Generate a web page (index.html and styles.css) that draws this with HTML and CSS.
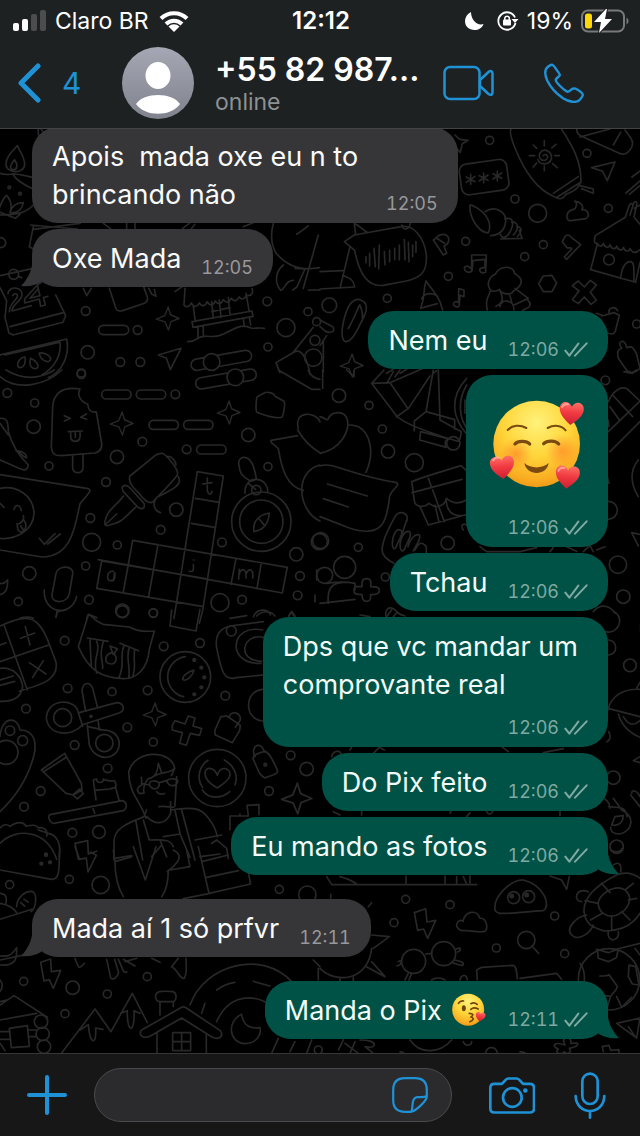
FILE: index.html
```html
<!DOCTYPE html>
<html lang="pt-BR">
<head>
<meta charset="utf-8">
<meta name="viewport" content="width=device-width, initial-scale=1">
<title>+55 82 987...</title>
<link rel="stylesheet" href="styles.css">
</head>
<body>
<svg class="defs" aria-hidden="true">
  <symbol id="ticks" viewBox="730 649 72 48"><path d="M734 675l12 15 27-36M763 690l35-37" fill="none" stroke="currentColor" stroke-width="6" stroke-linecap="round" stroke-linejoin="round"/></symbol>
  <symbol id="tail" viewBox="0 0 24 28"><path d="M12 0v6c-1 7-5 15-11 21 8 1 15-1 20-4l3-3V0z" fill="currentColor"/></symbol>
  <symbol id="spark" viewBox="0 0 80 80"><path d="M42 3l8 25 27 12-26 10-8 27-11-26-28-9 27-11z" fill="none" stroke="currentColor" stroke-width="4.5" stroke-linejoin="round"/></symbol>
  <symbol id="heart" viewBox="0 0 80 80"><path d="M40 76C20 59 2 45 2 24 2 2 30-3 40 18 49-4 78 1 78 24c0 21-18 35-38 52z"/></symbol>
  <linearGradient id="red" x1="0" y1="0" x2="0" y2="1"><stop offset="0" stop-color="#ff6f66"/><stop offset=".45" stop-color="#f13b42"/><stop offset="1" stop-color="#cf1d32"/></linearGradient>
  <radialGradient id="gold" cx=".5" cy=".25" r=".78"><stop offset="0" stop-color="#fff27a"/><stop offset=".5" stop-color="#ffd53a"/><stop offset=".85" stop-color="#f9ac21"/><stop offset="1" stop-color="#ec9315"/></radialGradient>
  <radialGradient id="blush"><stop offset="0" stop-color="#ff7a26" stop-opacity=".6"/><stop offset="1" stop-color="#ff7a26" stop-opacity="0"/></radialGradient>
  <linearGradient id="grey" x1="0" y1="0" x2="0" y2="1"><stop offset="0" stop-color="#a5a8b4"/><stop offset="1" stop-color="#80838d"/></linearGradient>
</svg>

<header class="top">
  <div class="status">
    <div class="status-side">
      <svg class="signal" viewBox="0 0 34 22" aria-hidden="true"><g fill="#fff"><rect y="13" width="6" height="8" rx="2"/><rect x="9" y="9" width="6" height="12" rx="2"/></g><g fill="#4b4d4e"><rect x="18" y="4" width="6" height="17" rx="2"/><rect x="27" width="6" height="21" rx="2"/></g></svg>
      <span>Claro BR</span>
      <svg class="wifi" viewBox="0 0 30 22" aria-hidden="true"><g fill="none" stroke="#fff" stroke-width="4"><path d="M2 8.500a18.500 18.500 0 0 1 26 0M7 14a11.500 11.500 0 0 1 16 0"/></g><path d="M15 22l-5.500-5.500a8 8 0 0 1 11 0z" fill="#fff"/></svg>
    </div>
    <time class="clock">12:12</time>
    <div class="status-side status-right">
      <svg class="moon" viewBox="0 0 20 20" aria-hidden="true"><path d="M6 1C2 3 0 6.500 0 10c0 5.500 4 9 9.500 9 4 0 7.500-2 9-6C12 15 6 9 6 1z" fill="#fff"/></svg>
      <svg class="lock" viewBox="0 0 22 20" aria-hidden="true"><path d="M18.500 12A8.700 8.700 0 1 1 18 6.500" fill="none" stroke="#fff" stroke-width="1.800"/><path d="M14.500 8h7L18 12z" fill="#fff"/><rect x="6" y="8.500" width="8" height="6" rx="1" fill="#fff"/><path d="M7.800 9V7a2.300 2.300 0 0 1 4.500 0v2" fill="none" stroke="#fff" stroke-width="1.500"/></svg>
      <span>19%</span>
      <svg class="battery" viewBox="0 0 48 24" aria-hidden="true"><rect x="1" y="1.500" width="42" height="21" rx="6" fill="none" stroke="#77797a" stroke-width="2"/><path d="M45.500 8.500a4 4 0 0 1 0 7z" fill="#77797a"/><rect x="4" y="4.500" width="7" height="15" rx="2.500" fill="#ffd60a"/><path d="M25 0L13 13h7l-2 11 13-14h-7l2-10z" fill="#fff" stroke="#1e2122" stroke-width="2" paint-order="stroke"/></svg>
    </div>
  </div>
  <div class="contact-bar">
    <a class="back" href="#chats" aria-label="Voltar, 4 conversas">
      <svg viewBox="0 0 24 40" aria-hidden="true"><path d="M20 3L3 20l17 17" fill="none" stroke="currentColor" stroke-width="5" stroke-linecap="round" stroke-linejoin="round"/></svg>
      <span>4</span>
    </a>
    <svg class="avatar" viewBox="0 0 72 72" role="img" aria-label="Foto do contato"><circle cx="36" cy="36" r="36" fill="url(#grey)"/><ellipse cx="36" cy="28.500" rx="12.500" ry="13.500" fill="#fff"/><path d="M14 57c8-12 36-12 44 0-9 13-35 13-44 0z" fill="#fff"/></svg>
    <div class="contact">
      <h1>+55 82 987...</h1>
      <p>online</p>
    </div>
    <button class="icon video" aria-label="Chamada de vídeo"><svg viewBox="0 0 51 36"><g fill="none" stroke="currentColor" stroke-width="2.500" stroke-linejoin="round"><rect x="1.500" y="2" width="35" height="32" rx="5.500"/><path d="M37 15l8.500-8c2-1.600 4-1 4 1.500v19c0 2.500-2 3-4 1.500L37 21z"/></g></svg></button>
    <button class="icon phone" aria-label="Ligar"><svg viewBox="670 183 124 124"><path d="M683 194c12-9 15-7 24 7 17 25 15 16 0 32-5 7 24 33 33 38 5 4 9-1 15-6 8-7 16-2 29 8 10 8 7 12-2 23-11 13-36 7-53-4-19-13-39-34-49-55-8-18-9-34 3-43z" fill="none" stroke="currentColor" stroke-width="7.500" stroke-linejoin="round"/></svg></button>
  </div>
</header>

<main class="chat">
  <svg class="wallpaper" viewBox="0 129 640 924" preserveAspectRatio="xMidYMin slice" aria-hidden="true">
    <g transform="translate(0 125) scale(.3333)">
      <path d="M52 62c-18 20-34 34-34 56 0 28 56 30 56 0 0-22-12-34-22-56zM44 104c-12 12-18 28-5 30 14 1 15-16 5-30zM0 145c20 7 28 2 42 2 20 0 30 5 56 10M38 146c10 25 60 45 65 48M102 238c-30 35-70 30-102 32M0 245c5-18 18-34 20-34 5 5 20 25 10 52M30 263c5-20 20-30 40-30-4 20-15 33-40 30M0 262l46 18 14-12M115 10v20M122 10l8 12"/>
      <circle cx="28" cy="187" r="4"/><circle cx="60" cy="206" r="4"/><circle cx="2" cy="353" r="15"/><circle cx="41" cy="448" r="15"/><circle cx="257" cy="558" r="13"/><circle cx="413" cy="615" r="13"/><circle cx="802" cy="529" r="13"/><circle cx="924" cy="560" r="12"/><circle cx="858" cy="608" r="27"/><circle cx="263" cy="682" r="20"/><circle cx="361" cy="711" r="13"/><circle cx="421" cy="711" r="13"/><circle cx="804" cy="666" r="12"/><circle cx="950" cy="590" r="12"/><circle cx="945" cy="646" r="15"/><circle cx="940" cy="698" r="26"/><circle cx="244" cy="744" r="12"/>
      <path d="M100 305l-12 60 14 8M92 300l140 12M240 295l-140 18M310 295l22 16M380 295v16M405 295v16M548 310l20-15M575 310l10-12M730 305l30-12"/>
      <path d="M0 452l100-22M55 455l10 3M0 488l20 40-5 50 12 46 12 6 150-38 8-20-30-62M30 605l160-42"/>
      <path d="M24 506c2-24 44-22 42 4-1 18-30 28-30 48l58-16M38 512c4-8 16-8 14 2-2 12-24 22-24 46M112 480l-38 42v12l44-12 4 22 14-4-6-22 14-4M130 468l-18 12 8 32-30 8 24-28"/>
      <path d="M0 690l200-48c10 50-15 100-55 116M15 690l165-38c5 40-18 78-55 98"/>
      <path d="M75 696c-20 2-30 30-15 32 14 0 18-20 15-32zM92 700c-6 20 2 35 18 30 12-7-4-24-18-30zM118 684c2 20 24 32 33 22 5-12-16-24-33-22z"/>
      <rect x="296" y="601" width="90" height="28" rx="14"/><path d="M250 490l10 22 14-22M328 490l18 55c3 12 10 15 22 12l65-22c10-5 12-12 8-22l-9-25M446 490l10 18 12 6-5-20M525 500l20-14"/>
      <path d="M475 690l68-20-32 64-12-35zM555 490l-3 50c5 8 18 6 22-6 8 16 18 12 24 0 8 12 18 10 24-4 8 15 18 12 24-2 8 12 18 10 24-4 8 12 18 8 24-4 8 12 18 8 24-4 8 10 18 6 20-5 20 4 22-10 18-20M580 545l6 44M738 505l10 55M635 530l5 50M685 518l5 52M635 560l55-12M658 525l5 52M576 590l180-32 3 16-180 33zM594 606v32M610 604v28M730 580l3 24M748 576l4 24M563 650c24 2 25-15 50-16s30 6 60-8c40-20 55-30 80-17 10 3 24-2 40 1"/>
      <rect x="572" y="689" width="184" height="34" rx="17" transform="rotate(-10 664 706)"/><circle cx="635" cy="711" r="25" fill="#000"/><path d="M820 296c-8 30-8 60 8 88 30 36 70 56 130 44M890 328l35-25M850 420c-30 25-22 60-8 76 14-2 12-30 38-30M885 430l30 2-25 55-12 8M910 490l45-160M925 495h35M840 743l-12-30 55-32c20-12 40 20 47 67M880 682l60-75"/>
    </g>
    <use href="#spark" x="155" y="306" width="25" height="25"/>
    <g transform="translate(320 125) scale(.3333)">
      <path d="M405 30l14 13 25 3-17 10-6 26-15-15M575 10c-15 10 25 105 60 150 25 35 52 50 78 60 15 5 20-5 25-12 35-15 38-22 45-40 0-60-25-105-58-155M700 205l75-50M712 216l70-44M780 182l40 10v13l-35-14M670 92c8-10 20 4 8 12-14 8-24-8-18-20 12-18 38-4 34 18-6 20-36 18-40 2M673 47v16M673 123v14M628 92h16M704 92h14M640 60l10 10M696 68l12-10M640 126l10-12M698 116l14 12"/>
      <rect x="421" y="110" width="143" height="93" rx="22" transform="rotate(-8 492 157)"/>
      <path d="M452 148v30M439 156l26 14M465 154l-26 18M491 144v30M478 152l26 14M504 150l-26 18M532 138v30M519 146l26 14M545 144l-26 18"/>
      <path d="M450 240c-3 30 20 80 54 84 12-20 5-60-50-84zM495 260c30-20 65 0 62 30-4 35-30 42-45 42M554 282c30-10 30 20 10 48-10 12-20 8-24-4M575 292c20-4 24 20 5 38M590 306c18-2 16 16 3 28M598 316l8 24-64 2"/>
      <circle cx="509" cy="46" r="12"/><circle cx="801" cy="85" r="12"/><circle cx="585" cy="222" r="12"/><circle cx="653" cy="265" r="27"/><circle cx="865" cy="250" r="12"/><circle cx="437" cy="349" r="12"/><circle cx="670" cy="359" r="12"/><circle cx="614" cy="395" r="12"/><circle cx="385" cy="454" r="12"/><circle cx="202" cy="520" r="12"/><circle cx="28" cy="541" r="22"/><circle cx="867" cy="404" r="16"/><circle cx="950" cy="597" r="12"/>
      <path d="M770 10c0 15 5 20 18 25l110 50c22 10 50-20 35-45L915 15M880 60l22-38M780 36l90-24M815 128l70-17-23 56-14-28zM936 156l24-18M918 204l42-36M928 208l32-26M764 228c10 5 5 25-6 26-22 6-22 35-5 33l45-6c16-10 2-30-12-26 8-16-10-25-22-27z"/>
      <path d="M73 350l30-20 140-25c35-8 70 30 76 85 3 50-15 68-60 78l-70 13c-40 5-70-25-85-105zM107 330l-4-34c15 5 20 15 38 26M90 365L60 490M0 440l68-3M0 492l104-6c-4-30-25-28-36-35M245 300c5 16 20 16 26-4"/>
      <path d="M138 395v18M149 385v38M162 370l4 55M178 360l-2 72M193 380l2 40M209 376v34M224 370v34M238 360v45M253 344l2 60M265 352l2 58M278 360v35M288 350v32" />
      <path d="M340 345l30 45 10-5-8-22c20-5 20-40-8-34-15 2-15 13-24 16zM350 340l24 15M735 335l-8 15 14 18c5 2 15-2 14 4l-22 24 7 7 42-44-28-22c-6-10-16-8-19-2zM440 440c-10-6-10-18 5-16l10 8V390h44l-2 52c-18 8-28-16-2-14V403l-36 4-3 30c-5 6-10 6-16 3M408 545c-15-6-5-20 8-12v-42l16 4v20l-12-4-2 28c0 6-5 8-10 6M318 468c-10 30 0 40-16 82M318 468c30 42 30 38 42 62l8 25M305 522c5-16 28-22 48-8M302 550l50-14"/>
      <path d="M510 493c-14-20 5-42 16-45 15-30 55-26 58-2 28 14 25 36-4 52-4 12-30 13-42-4-12 8-25 5-28-1zM510 500c-5 20-15 22-8 55M538 494c15 28 10 40-10 50M570 512c8 25 0 36 30 20l20-10c28 25-8 30-12 34M585 490l40 30M540 545c0-24 42-24 42 10"/>
      <path d="M670 453l26-2 14 23-14 26h-26l-14-24zM775 468l18 18 18-20 18 14-18 22 18 24-16 12-20-22-18 20-18-12 20-26-20-16zM826 332l90-55 12-36c4-8 12-6 10 4M930 270l12-38c5-5 10-2 8 8l-8 36M943 250l18-10M945 280l15 18M826 332c-5 14-3 25 6 23 6 12 16 10 18 0 5 15 18 15 20 4 5 15 18 15 20 4 5 15 18 15 20 4 5 14 18 14 20 4 8 15 20 14 28 4M832 358l-20 76 135 38 13-60M902 460c3-30 14-52 30-50 10 2 10 10 10 60"/>
      <path d="M75 650c-14-10-10-50 4-90 12-35 34-45 52-30 15 12 8 35-8 62-16 34-30 60-48 58zM85 610c15-24 28-60 34-70 8 14 10 25 8 48M0 585l38 20c10 15-5 20-20 15L0 605M0 662l20-30M10 645v95M200 745l20-12M240 745l20-12M845 573l38-10 15 8-12 48c-5 10-15 10-25 4M868 565c-5-15 15-25 25-8M895 700c-5-24 0-26 10-30-18-22 12-32 15-2 16-6 20-2 30 20l10 42c-10 12-30 16-40 6zM830 565l15 5M340 745l10-8"/>
    </g>
    <use href="#spark" x="339" y="353" width="25" height="25"/>
    <g transform="translate(0 370) scale(.3333)">
      <path d="M0 20c50 45 140 25 185-20M18 0c50 30 100 28 145 0"/>
      <circle cx="244" cy="12" r="13"/><circle cx="22" cy="69" r="13"/><circle cx="104" cy="99" r="12"/><circle cx="101" cy="170" r="20"/><circle cx="427" cy="215" r="13"/><circle cx="147" cy="288" r="12"/><circle cx="351" cy="261" r="20"/><circle cx="526" cy="73" r="13"/><circle cx="560" cy="238" r="13"/><circle cx="745" cy="195" r="20"/><circle cx="804" cy="290" r="12"/><circle cx="318" cy="336" r="13"/><circle cx="271" cy="444" r="13"/><circle cx="529" cy="419" r="20"/><circle cx="482" cy="479" r="13"/><circle cx="275" cy="517" r="27"/><circle cx="352" cy="525" r="12"/><circle cx="257" cy="588" r="12"/><circle cx="88" cy="610" r="20"/><circle cx="55" cy="695" r="12"/><circle cx="267" cy="689" r="13"/><circle cx="367" cy="722" r="20"/><circle cx="460" cy="729" r="12"/><circle cx="666" cy="517" r="13"/><circle cx="889" cy="553" r="20"/><circle cx="900" cy="618" r="13"/><circle cx="893" cy="676" r="13"/><circle cx="726" cy="689" r="13"/><circle cx="660" cy="698" r="27"/><circle cx="958" cy="515" r="24"/>
      <path d="M240 57c-55-8-80 14-82 55l-4 120c4 25 15 25 30 25l100-8c20-5 24-18 20-35l-15-88c-20 2-24-8-26-24-18-5-34-25-23-45zM218 256v40c5 16 26 16 31 0v-44M193 137l18 8-18 8M260 132l-18 10 18 6M205 185l42-2M212 186c0 20 0 28 14 28s16-12 14-28M226 186v16"/>
      <rect x="305" y="60" width="88" height="27" rx="13"/><rect x="409" y="60" width="88" height="27" rx="13"/><rect x="447" y="151" width="88" height="27" rx="13"/><rect x="551" y="151" width="88" height="27" rx="13"/><rect x="590" y="225" width="88" height="27" rx="13"/><rect x="586" y="10" width="184" height="34" rx="17" transform="rotate(-10 678 27)"/><circle cx="706" cy="22" r="25" fill="#000"/>
      <path d="M835 0l100 58h25M925 0c5 18 20 25 35 28M772 80l22-12c2-2 28-2 30 10l28 16c5 5-2 45-7 48-15 5-60-8-74-15-5-3-2-45 1-47zM0 145c18-2 25 5 25 40 15 55 50 90 60 100-5 25-20 14-50 0L0 270M0 160l25 35M48 243c25-2 32 14 32 20-12 0-16-14-25-20"/>
      <path d="M0 314l265 42c10 5 5 10-25 45-15 70-25 160-115 160L0 540M0 355c50-10 100 20 102 75-2 55-60 80-102 75M0 400l12 12M42 418c4-16 18-16 22 4M50 462c20 0 22-20 20-25M52 466c0 40 40 12 20-15M62 468l10 15M118 505l15 18 32-32M143 522l38-30"/>
      <path d="M390 318l76-62c20-10 25-8 42 12 24 28 28 44 22 50-15 20-45 50-72 78-10 5-20 0-40-25-20-20-35-34-28-53zM366 353c4-10 15-10 28 5l38 42c5 18-8 20-20 10l-42-45zM370 378c-20 30-50 40-56 80 0 10 5 10 15 7 45-12 40-20 78-53M318 462l32-30M500 260c15-5 28 15 28 25M535 320c15 25-20 40-64 62-15 15-10 40 10 46"/>
      <path d="M592 305l78 13-62 404-10 38M592 305l-70 440M586 385l72 12M574 460l70 12M398 511l464 81-15 77-552-100M398 511l-28 155M305 573l312 53M305 573l-15 82 320 55M474 524l-28 156M708 566l-15 77M784 578l-13 78M622 324v38c4 15 12 12 14 2M608 342l28-4M580 570h2M580 584c2 20-2 22-12 20M340 604c-20-2-22 30-8 28 14 0 14-14 12-24l-4 25M718 598l-2 30M718 612c5-20 22-18 20 12M738 612c10-24 24-10 20 12"/>
      <path d="M168 610c5-25 55-25 50 2l-10 60c-8 30-55 30-52 2zM133 660c-5 70 80 85 97 20M172 722l-4 20M0 640c15 4 20-8 23-10 0 35-10 40-23 44M260 745l5-12 25 10M60 745c10-5 30-5 40 0"/>
      <path d="M718 290c-8-24 10-32 25-25 10 5 20 25 26 60-15 20-50-8-51-35zM735 370c-2-60 70-50 68-5M745 340l22 18"/><circle cx="769" cy="360" r="14"/><circle cx="784" cy="455" r="89"/><circle cx="784" cy="455" r="65"/><path d="M762 485c-5-35 18-50 46-56-3 35-18 50-46 56M776 445l18 22M895 175c-15-55 55-50 65-20M893 180c15 25 35 50 67 68M893 197l-80 14c-5 8 15 15 22 25 10 60 25 115 75 125M960 285c-80 20-65 140 0 168M760 740c12-25 42-25 52-5M866 740l8-14 10 14M690 745l50-8M950 600v30M945 675v20"/>
    </g>
    <use href="#spark" x="109" y="411" width="25" height="25"/><use href="#spark" x="216" y="400" width="25" height="25"/>
    <g transform="translate(320 370) scale(.3333)">
      <path d="M80 0l22 20V0M8 0v55M192 0L155 40l75 98c30 30 130 60 180 75 10 5 12-15 14-28L360 150 355 0M160 40l50-2L320-10M210 38l54 78-35 25M220 5l-20 35M265 116l65-98M340 0l-22 125 86 24v28M318 125l-35 28v30M302 185l85 22c-15 0-12 22-8 25l-80-22zM440 25c-55 60-40 120-2 165M440 45c-30 50-20 100 0 130M435 90v40M240 0l-15 20"/>
      <circle cx="57" cy="77" r="20"/><circle cx="147" cy="106" r="12"/><circle cx="187" cy="177" r="12"/><circle cx="204" cy="244" r="20"/><circle cx="283" cy="278" r="27"/><circle cx="400" cy="220" r="20"/><circle cx="383" cy="519" r="20"/><circle cx="115" cy="532" r="12"/><circle cx="196" cy="621" r="12"/><circle cx="74" cy="592" r="33"/><circle cx="14" cy="616" r="24"/><circle cx="2" cy="512" r="24"/><circle cx="856" cy="31" r="13"/><circle cx="894" cy="584" r="26"/><circle cx="910" cy="680" r="20"/><circle cx="865" cy="421" r="27"/>
      <path d="M0 250c60-12 90-65 82-102-10-30-50-24-58 0-4 5-10-5-24-8M88 165c60 0 80 75 50 142M0 288c40-14 80 25 230 50 14 8-25 25-22 50-10 60-15 120-120 86L0 440M22 342l120 36M10 386l75 25M275 335c50-20 100-32 148-48l16 14M275 335c5 25 5 50 10 65 8 12 32 12 42 0 25 20 48 5 52-15 18 15 40 18 60 5M300 410l25 55 110-30M325 325l48 130M276 368l150-40M378 390c5 50 35 50 60 45M345 405l12 50"/>
      <path d="M260 455c8-30-25-35-35-15-10 18-35 60-38 92-5 24 15 36 35 48M260 450l-20 60M217 520c0-18 10-48 24-40 14 5-10 40-12 50-8 15-12 0-12-10zM240 525c0-20 14-45 28-40 12 8-12 42-14 52-8 14-14 0-14-12zM264 530c4-20 20-40 34-35 8 12-14 35-18 48M285 540c12-25 22-25 34-10v20M20 640c30-4 60-5 85 0v20M25 700c-4-40 8-60 40-62M0 700l105-12M108 650h18c0-10-2-24 14-24s12 14 12 24c15 0 26 0 26 12s-15 12-26 12c0 12 0 20-12 20s-14-10-14-20c-12 0-24 0-24-10s2-14 6-14zM198 740c-5-24 10-30 22-24l25 20M430 480c-10-15 0-20 10-16M480 530l20 15h100l50-12M690 545l10-12M740 530l30 14M790 545l20-18 10 18M830 540l25-10"/>
      <path d="M865 95c15-35 45-55 65-30l30 28M878 75l60 65M865 185l95-92M870 245l90-90M870 110l30 42M955 270c-25 30-25 70 0 110M935 488l25 5M935 488l20 40M865 150l2 20M862 320l5 20M912 5l25 5 12-10M820 725c20-25 50-20 65 5"/>
    </g>
    <g transform="translate(0 610) scale(.3333)">
      <path d="M0 48c35-15 80-35 108-12 30 25 40 70 60 120 10 60-60 70-110 88M12 45l70 195M0 155l146-50M62 85l42-16M76 50l14 55M88 158l50 34M130 152l-32 50M0 105l18-6M0 175c35-5 65 20 68 55-5 40-40 45-68 44M0 210l40-12M0 226l44-12M235 110l30-95c5-5 20 20 45 28l78 8c15 8 30 15 75 12l-15 55c-5 60-40 90-80 88-60-3-100-20-133-96zM262 84l62 10M360 100l56 22M270 90l4 80M290 94c15 30-15 50 0 95M310 95c-15 40 0 60-2 80M372 108c-15 30 5 50-15 95M388 112c-12 30 5 60-2 92M404 118c-5 40 5 50-5 80M330 108l22 8-12 18zM335 128c-25 8-22 34 0 34 18-2 18-28 0-34"/>
      <path d="M515 0l-5 48 78 15 12-65M168 20l4-15 25-5"/>
      <circle cx="367" cy="5" r="18"/><circle cx="460" cy="9" r="13"/><circle cx="194" cy="92" r="13"/><circle cx="491" cy="109" r="13"/><circle cx="600" cy="99" r="13"/><circle cx="556" cy="201" r="76"/><path d="M556 140a61 61 0 0 0-5 120M548 208c0-12 20-24 34-28-2 14-22 38-34 28z"/><g class="dots"><circle cx="583" cy="150" r="4"/><circle cx="604" cy="173" r="4"/><circle cx="613" cy="202" r="4"/><circle cx="604" cy="232" r="4"/><circle cx="583" cy="253" r="4"/></g>
      <circle cx="203" cy="235" r="13"/><circle cx="336" cy="245" r="12"/><circle cx="443" cy="241" r="13"/><circle cx="676" cy="257" r="13"/><circle cx="78" cy="296" r="13"/><circle cx="382" cy="352" r="13"/><circle cx="224" cy="405" r="13"/><circle cx="460" cy="396" r="12"/><circle cx="323" cy="475" r="13"/><circle cx="122" cy="543" r="13"/><circle cx="72" cy="590" r="13"/><circle cx="217" cy="668" r="13"/><circle cx="297" cy="666" r="19"/><circle cx="872" cy="436" r="13"/><circle cx="920" cy="477" r="20"/><circle cx="807" cy="543" r="13"/>
      <path d="M790 35L690 48c-35 10-45 30-40 65 15 80 25 100 60 90l80-8M770 18c20-20 45-14 55 0M866 18l9-14 10 14M788 60c-100-20-110 105-5 100M790 82c-60-15-85 70-5 72M787 238c-55 5-55 90 0 95"/><circle cx="694" cy="63" r="15"/>
      <circle cx="188" cy="323" r="27"/><path d="M247 345c-30 35-100 35-108-20 2-62 88-60 95-20l14 44M238 308l112-30c20 0 30 24 5 32l-110 35M256 300l-10-60c5-25 24-25 32-5l14 55M262 345l6 60c20 55 90 45 90-5-5-45-50-40-60-40l-4-28M264 350l38 8"/><circle cx="313" cy="399" r="26"/><circle cx="273" cy="319" r="3"/>
      <path d="M517 346l8-14 30 10 10-24 20 6-6 24 26 8-6 20-28-6-12 36-20-6 8-32-30-8zM645 360l18-40 18-2 40 28-2 16-22 36-52-24zM688 320c5-22 40-10 32 12l-14 20M760 448c-5-10 15-20 35-24 15 5 25 30 38 58 0 12-20 14-38 22-20-10-20-25-35-56zM765 440c-12-25 5-42 20-30l10 16"/><circle cx="796" cy="464" r="4"/>
      <path d="M0 380c5-65 55-60 60-20 45 0 50 40 42 75-20 80-60 130-102 170"/><circle cx="30" cy="362" r="14"/><circle cx="68" cy="392" r="15"/><circle cx="18" cy="427" r="36"/><path d="M124 480l70-50 50 90 2 20-26 15-22-5zM133 484l66-42M218 555l22-18 10 14-18 16zM288 570l-8-60 10-3c0 14 20 14 20 0 12 8 30 5 34 6 12 25-5 20-15 24l-45 4M346 530l12 44M150 614l216-42c18 5 15 22 5 30l-210 38c-10 0-20-20-11-26zM277 588l7 22"/>
      <path d="M438 625c-20-60-50-70-52-140 20-70 130-65 138-10-20 20-40 5-72 30-10-5-25 25-20 45M424 502l2 22c-10 5-20 15-8 26h10M475 460c-2 30-10 40-22 44M475 460l10 28M424 520l24 5M524 475l-10 22M530 500l-5 85c0 15-20 0-48 5M440 620c30 30 60 20 72-10V575M448 524c0-14 22-14 30-4 0 18-20 24-30 4zM500 512c12-10 35-5 33 2-5 20-28 15-33-2zM478 518l22-6M470 545c8 10 20 8 24 5M440 600l-8 20c-50 20-90 35-90 75v55M512 600c70-10 90-5 110 20 20 25 25 38 30 60M408 635l20 115M430 630l18 60M545 600l40 150M525 600l15 70M490 680l50-8 30 70M450 690c30 0 60-5 70 20M480 690l20 50M345 745l50-8M455 740l30-35"/>
      <circle cx="652" cy="504" r="86"/><path d="M652 534c-52-28-42-70-14-56 10 4 12 14 14 18 10-32 40-22 38 0-4 18-28 30-38 38zM608 533a58 58 0 0 1 16-82M705 525c12-30-5-60-32-75M607 540c20 30 60 25 82 5"/>
      <path d="M690 660v-42h55l-4-32 36-2v30M720 616v-4M0 654c10-14 25-10 30-5 20-15 40-15 48 0 20-5 30-5 38 5 20-5 28 12 24 24M0 700c50-50 140-40 170 48M115 660l30 10c25 5 40 30 32 70M225 700l38-8 2 40 25-8M225 700l10 48M665 675l-80 15M635 700l15-10 30 25 5 30M600 740l60-8"/><circle cx="138" cy="734" r="4"/>
    </g>
    <use href="#spark" x="142" y="702" width="25" height="25"/><use href="#spark" x="279" y="782" width="35" height="33"/>
    <g transform="translate(320 610) scale(.3333)">
      <path d="M200 20l15-20M220 20l10-12 25 10M120 15l30 5M855 65c40 10 60-40 28-60M866 90c28 5 28 40 0 45M962 45v20M864 300c10-45 50-65 96-62M864 295l96 25M950 235l10-18M895 312c8 28 30 55 65 70M910 320c15 25 30 30 50 12M866 365c8 15 5 25-5 30M960 440l-20 12 20 6M35 440c5-20 25-20 28-8M90 420l6-10M160 430l18-18 15 8M545 410l20 15M670 428l60-12M866 590c30 5 50-5 55 30M880 565l25 35c40 20 35 60-5 72-25 0-28-10-28-20M875 645l10-25 25-3c0 12-8 34-35 28M935 550c0-10 15-12 25 10M932 555l28 35M40 605l20 10M125 605v10M390 610l5-10M440 620l10-12M500 605c5 10 12 10 18 0M720 605v12M840 560c20 5 30 20 30 35"/>
      <circle cx="930" cy="166" r="19"/><circle cx="880" cy="503" r="20"/><circle cx="890" cy="710" r="20"/>
    </g>
    <g transform="translate(0 850) scale(.3333)">
      <path d="M0 60l155 28c25 0 22-30 24-88M225-10l14 38 20-4 5 42 25-50-18-10M345 35l50-15M345 35c0 50 10 80 25 105M340 0l5 35M400-10l36 100 32-100M510 60l60-10-10-50M505 60c0 30-5 60-20 80M520 0c30 15 20 35-18 65M595-10l32 140 125-28-8-40M605 35l80-20M620 82l95-20M550 146l80-16"/><g class="dots"><circle cx="138" cy="14" r="4"/><circle cx="124" cy="41" r="4"/><circle cx="150" cy="37" r="4"/></g>
      <circle cx="29" cy="104" r="12"/><circle cx="208" cy="88" r="12"/><circle cx="302" cy="105" r="26"/><circle cx="838" cy="118" r="12"/><circle cx="922" cy="134" r="26"/><circle cx="71" cy="394" r="12"/><circle cx="218" cy="413" r="20"/><circle cx="322" cy="432" r="12"/><circle cx="442" cy="380" r="12"/><circle cx="195" cy="491" r="12"/>
      <path d="M0 130c20 0 20 15 18 30M0 160c30 5 45 20 50 28M50 170c0-30 30-50 48-45 15 10 10 50-5 60M62 158l12 10M72 148l12 8M0 208l96-30M0 345c55 5 50-30 50-52-20 30-30 25-50 25M0 330l95-20"/>
      <path d="M122 337l30-10 2 38 28-4-22 54-12-26-16 4zM225 325c10 30 12 35 28 15M320 328l12 55c8 10 20-2 24-15l-12-40M355 328c10 20 15 45 25 38M370 328l35 20M515 350c20 10 25 40 38 35 10-20 5-40 5-60M515 350l20-25M455 325l25 12M410 325l-35 10M0 390c10 10 10 20 0 35M0 510l110-20M0 465l42-28 100 65M0 455l20-5M28 535l54-8 6 62-54 4zM0 545h30M0 568h30M85 540h25M88 560h20M0 580l15 22"/>
      <circle cx="123" cy="515" r="20"/><circle cx="128" cy="552" r="20"/><circle cx="132" cy="590" r="20"/>
      <path d="M185 609l100-132 48 68 64-115 45 88M240 540l25-16c5 60 25 65 22 10l22 4M362 490l20-8c-2 70 24 70 20 0l18 8M425 540l120-68c5-3 8-2 14 2l102 68c12 18-5 28-24 20l-92-58-95 55c-25 10-35-8-25-19zM471 550v60M619 550v60M480 455v40M520 455v15M478 425c15-2 30-1 40 0 15 5 12 28 0 30h-40c-15-5-15-25 0-30zM518 548h54v54h-54zM545 548v54M518 575h54M570 465c45-125 220-165 305-70M650 515c30-70 90-85 145-60M650 420c16-12 34-20 55-23M760 394l50 14M605 490l10-30M725 493c-45 20-40 85 10 88 35-2 50-25 45-48-35 5-50-10-55-40zM815 610l20-45M870 605l15-30M920 610l15-40M940 330l20 20"/><circle cx="955" cy="600" r="12"/><path d="M955 355v35"/>
    </g>
    <g transform="translate(320 850) scale(.3333)">
      <path d="M20 80l15 24h435M60 80c20 5 40 15 50 22M258 78v24M375 78v26M410 80v22M430 80l10 22M450 78v22M690 78l35 12 15 28 8-38M525 178c-5-40 50-90 85-88 60 15 85 75 60 92-25 0-80 10-130 8-10-2-15-5-15-12zM283 188l34-12 4 40 26-5-24 54-12-28-18 4zM425 242c-30-10-8-40 4-28 5-30 42-38 50-10 25 0 25 38 15 40-20 5-50-5-69-2zM636 288l20 22M235 335c15-10 8 15-4 12M317 312l18-2M408 298c20-12 14 8 4 8M402 330c30 5 30 10 26 16-12 0-20-5-30-8"/>
      <circle cx="581" cy="143" r="18"/><circle cx="626" cy="140" r="18"/><g class="dots"><circle cx="575" cy="138" r="5"/><circle cx="620" cy="135" r="5"/></g><circle cx="257" cy="148" r="12"/><circle cx="390" cy="164" r="12"/><circle cx="222" cy="218" r="12"/><circle cx="529" cy="294" r="12"/><circle cx="734" cy="311" r="12"/><circle cx="704" cy="198" r="12"/><circle cx="619" cy="270" r="26"/><circle cx="281" cy="334" r="36"/><circle cx="371" cy="311" r="36"/>
      <path d="M155 255l53 5-48 35M155 335l40 45-56-30M0 355c50 50 145 35 155-60M60 382v10M100 382v10M32 145v-12M145 170l10-12M265 370l-10 20M275 370l-8 20M472 390l-2-30 15-8 95-6c10 5 10 20 12 40M600 385l110-15 15 18M335 390c10-8 30-8 40 0M420 390c5-18 20-18 22 0"/>
      <path d="M890 75c35-15 70 5 80 20M890 75c-50 25-100 60-98 110 5 35 20 45 60 58 60-2 90-20 118-68M835 165c-5-30 50-65 80-45 30 25 5 60-15 70-25 18-60 5-65-25zM845 100l25 28M795 152l40 8M812 210l35-20M875 240v-40M930 210l-25-25M940 100l-25 20M950 145l-25 5M805 125c-40-15-45 30-20 30M800 195c-30 5-65 40-45 60 20 20 55-5 65-30M865 245c-5 35 35 30 30 0M880 45c20-15 25 5 22 20M872 0c15 10 30 5 35-5"/>
      <circle cx="867" cy="388" r="92"/><path d="M830 298l35 10 32-12M833 305l2 20 30 10 24-12 5-20M780 340c15 20 15 40 12 60l-15 5M927 345l20 5 10 55-20-3-12-22zM840 378c10 0 20 0 27-4l25 35c0 12-15 20-20 30l-40-6M890 440l15 32 30-30M872 438l-12 40M880 300l80-20M945 295l15 20M890 520l70-16M890 520l60 44 10-60M925 530l22 32M55 600l15-30M105 575l-15 35M120 570c60 0 50 30 15 20l25 20M75 580l40 30M270 570c30 45 90 40 125 0M430 575c5 15 25 12 25 0M497 608c5-20 30-20 35 0M730 570l5 15c-35-12-40 5-20 12-15 12 10 20 18 8 5 10 25 5 15-10 30-5 35-20 5-15 0-20-15-20-23-10M850 605l-3-15 20-4 5 15 25-2v10M240 605l10 3M600 605l15 3"/>
    </g>
  </svg>

  <ol class="messages">
    <li class="msg in roomy"><p>Apois&nbsp; mada oxe eu n to<br>brincando não</p><span class="meta"><time>12:05</time></span></li>
    <li class="msg in"><svg class="tail"><use href="#tail"/></svg><p>Oxe Mada</p><span class="meta"><time>12:05</time></span></li>
    <li class="msg out turn"><p>Nem eu</p><span class="meta"><time>12:06</time><svg class="ticks"><use href="#ticks"/></svg></span></li>
    <li class="msg out stacked">
      <svg class="big-emoji" viewBox="499 45 306 402" role="img" aria-label="Rosto sorridente com corações">
        <circle cx="651" cy="219" r="130" fill="url(#gold)"/>
        <circle cx="590" cy="248" r="48" fill="url(#blush)"/><circle cx="728" cy="240" r="50" fill="url(#blush)"/>
        <g fill="none" stroke="#7a4a10" stroke-linecap="round"><path d="M564 177c14-15 36-17 56-6M684 171c20-11 42-8 54 7" stroke-width="6"/><path d="M586 219c8-10 34-11 44 0M672 218c10-10 36-10 45 1" stroke-width="10"/></g>
        <path d="M614 276c20 18 54 17 73 0-5 40-67 40-73 0z" fill="#7a4a10"/>
        <g fill="url(#red)"><use href="#heart" x="717" y="90" width="76" height="76" transform="rotate(5 755 128)"/><use href="#heart" x="510" y="252" width="76" height="76" transform="rotate(-5 548 290)"/><use href="#heart" x="705" y="281" width="76" height="76" transform="rotate(6 743 319)"/></g>
        <g fill="none" stroke="#ffb0a8" stroke-width="6" stroke-linecap="round" opacity=".8"><path d="M727 108q7-11 18-8M521 268q7-11 18-8M716 299q7-11 18-8"/></g>
      </svg>
      <span class="meta"><time>12:06</time><svg class="ticks"><use href="#ticks"/></svg></span>
    </li>
    <li class="msg out"><p>Tchau</p><span class="meta"><time>12:06</time><svg class="ticks"><use href="#ticks"/></svg></span></li>
    <li class="msg out stacked"><p>Dps que vc mandar um<br>comprovante real</p><span class="meta"><time>12:06</time><svg class="ticks"><use href="#ticks"/></svg></span></li>
    <li class="msg out"><p>Do Pix feito</p><span class="meta"><time>12:06</time><svg class="ticks"><use href="#ticks"/></svg></span></li>
    <li class="msg out"><svg class="tail"><use href="#tail"/></svg><p>Eu mando as fotos</p><span class="meta"><time>12:06</time><svg class="ticks"><use href="#ticks"/></svg></span></li>
    <li class="msg in turn"><svg class="tail"><use href="#tail"/></svg><p>Mada aí 1 só prfvr</p><span class="meta"><time>12:11</time></span></li>
    <li class="msg out turn"><svg class="tail"><use href="#tail"/></svg><p>Manda o Pix
      <svg class="emoji" viewBox="393 430 104 102" role="img" aria-label="Rosto mandando um beijo">
        <circle cx="444" cy="480" r="48" fill="url(#gold)"/>
        <g fill="none" stroke="#70430d" stroke-width="5" stroke-linecap="round"><path d="M415 461q6-9 15-7M452 462q10-6 19 2M452 479q9-8 22-1M447 491q18 1 6 11 14 6-4 14"/></g>
        <ellipse cx="431" cy="476" rx="6" ry="9" fill="#70430d"/>
        <use href="#heart" x="465" y="486" width="31" height="31" fill="url(#red)" transform="rotate(10 480 501)"/>
      </svg></p><span class="meta"><time>12:11</time><svg class="ticks"><use href="#ticks"/></svg></span></li>
  </ol>
</main>

<form class="composer">
  <button class="icon plus" type="button" aria-label="Anexar"><svg viewBox="0 0 40 40"><path d="M20 2v36M2 20h36" stroke="currentColor" stroke-width="4" stroke-linecap="round"/></svg></button>
  <div class="field">
    <input type="text" aria-label="Mensagem">
    <button class="icon sticker" type="button" aria-label="Figurinhas"><svg viewBox="0 0 36 36"><g fill="none" stroke="currentColor" stroke-width="2.200" stroke-linejoin="round"><path d="M34.800 19.500V13C34.800 5 31 1.200 23 1.200H13C5 1.200 1.200 5 1.200 13v10c0 8 3.800 11.800 11.800 11.800h5.500c4.500 0 16.300-10.800 16.300-15.300z"/><path d="M19.500 34.500c2-4-1-14 6.500-14.500 3 0 6 .5 8.500-.8"/></g></svg></button>
  </div>
  <button class="icon camera" type="button" aria-label="Câmera"><svg viewBox="507 680 138 110"><g fill="none" stroke="currentColor" stroke-width="8" stroke-linejoin="round"><path d="M523 700h22c8-6 12-16 20-16h25c8 0 12 10 20 16h20c8 0 12 4 12 12v62c0 8-4 12-12 12H523c-8 0-12-4-12-12v-62c0-8 4-12 12-12z"/><circle cx="577" cy="741" r="28"/></g><circle cx="616" cy="720" r="7" fill="currentColor"/></svg></button>
  <button class="icon mic" type="button" aria-label="Gravar áudio"><svg viewBox="762 661 96 141"><g fill="none" stroke="currentColor" stroke-width="8" stroke-linecap="round"><rect x="787" y="666" width="46" height="91" rx="23"/><path d="M767 733c2 60 84 60 86 0M810 778v20"/></g></svg></button>
</form>
</body>
</html>
```
FILE: styles.css
```css
* { box-sizing: border-box; }

body {
  margin: 0;
  height: 100vh;
  display: flex;
  flex-direction: column;
  background: #000;
  color: #fff;
  font-family: Inter, "Liberation Sans", sans-serif;
}

h1, p, ol { margin: 0; padding: 0; }
svg { display: block; flex: none; }
button { padding: 0; border: 0; background: none; font: inherit; }
.defs { position: absolute; width: 0; height: 0; }

/* Header */
.top {
  flex: none;
  background: #1e2122;
  border-bottom: 1px solid #414344;
}

.status {
  display: flex;
  align-items: center;
  height: 40px;
  padding: 1px 11px 0 13px;
  font-size: 23px;
}

.status-side { flex: 1; display: flex; align-items: center; gap: 8px; }
.status-right { justify-content: flex-end; }
.clock { font-size: 24px; font-weight: 600; }
.signal { width: 34px; height: 22px; }
.wifi { width: 30px; height: 22px; margin-left: 2px; }
.moon { width: 20px; height: 20px; }
.lock { width: 22px; height: 20px; margin-left: 4px; }
.battery { width: 48px; height: 24px; }

.contact-bar {
  display: flex;
  align-items: center;
  height: 88px;
  padding: 0 56px 2px 18px;
}

.back {
  display: flex;
  align-items: center;
  gap: 20px;
  width: 104px;
  color: #1f92d6;
  font-size: 30px;
  text-decoration: none;
}
.back svg { width: 24px; height: 40px; }

.avatar { width: 72px; height: 72px; margin-right: 21px; }
.contact { flex: 1; min-width: 0; padding-top: 2px; }
.contact h1 {
  font-size: 32px;
  font-weight: 600;
  line-height: 36px;
  white-space: nowrap;
}
.contact p { color: #8d9092; font-size: 23px; line-height: 28px; }

.icon { flex: none; color: #1f92d6; }
.icon svg { width: 100%; height: 100%; }
.video { width: 51px; height: 36px; margin-right: 50px; }
.phone { width: 40px; height: 40px; }

/* Conversation */
.chat {
  position: relative;
  flex: 1;
  min-height: 0;
  display: flex;
  flex-direction: column;
  justify-content: flex-end;
  overflow: hidden;
}

.wallpaper {
  position: absolute;
  inset: 0;
  width: 100%;
  height: 100%;
  color: #282828;
  fill: none;
  stroke: #282828;
  stroke-width: 5px;
  stroke-linecap: round;
  stroke-linejoin: round;
}
.wallpaper > use { stroke-width: 1px; }
.wallpaper .dots { fill: #282828; }

.messages {
  position: relative;
  display: flex;
  flex-direction: column;
  gap: 6px;
  padding: 0 32px 14px;
  list-style: none;
}

.msg {
  position: relative;
  display: flex;
  align-items: flex-end;
  gap: 20px;
  padding: 11px 20px 9px;
  border-radius: 26px;
  font-size: 27px;
  line-height: 38px;
}
.turn { margin-top: 18px; }
.roomy { gap: 28px; }
.in { align-self: flex-start; background: #363638; color: #fafafa; }
.out { align-self: flex-end; background: #005246; color: #f3fbf8; }
.stacked { flex-direction: column; gap: 0; }
.stacked p { padding: 0 10px 16px 0; }

.meta {
  display: flex;
  align-items: center;
  gap: 5px;
  padding-bottom: 1px;
  color: #98989b;
  font-size: 18px;
  font-variant-numeric: tabular-nums;
  line-height: 18px;
}
.stacked .meta { margin-top: -1px; }
.out .meta { color: #7fa9a1; }
.ticks { width: 24px; height: 16px; }

.tail { position: absolute; bottom: 0; width: 24px; height: 28px; }
.in .tail { left: -12px; color: #363638; }
.out .tail { right: -12px; color: #005246; transform: scaleX(-1); }

.big-emoji { width: 102px; height: 134px; }
.emoji {
  display: inline-block;
  width: 35px;
  height: 34px;
  margin: 0 1px 0 2px;
  vertical-align: -7px;
}

/* Composer */
.composer {
  flex: none;
  display: flex;
  align-items: center;
  height: 83px;
  padding: 0 34px 0 27px;
  background: #171717;
  border-top: 1px solid #363636;
}
.plus { width: 40px; height: 40px; margin-right: 27px; }
.field {
  flex: 1;
  min-width: 0;
  display: flex;
  align-items: center;
  height: 54px;
  margin-right: 37px;
  padding: 0 23px 0 24px;
  border: 1px solid #4a4a4c;
  border-radius: 27px;
  background: #2b2b2d;
}
.field input {
  flex: 1;
  min-width: 0;
  height: 38px;
  padding: 0;
  border: 0;
  outline: 0;
  background: none;
  color: #fff;
  font: inherit;
  font-size: 27px;
}
.sticker { width: 36px; height: 36px; }
.camera { width: 46px; height: 37px; margin-right: 39px; }
.mic { width: 32px; height: 47px; }
```
